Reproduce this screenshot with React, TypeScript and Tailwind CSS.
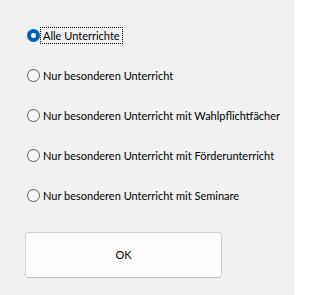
const options = [
  "Alle Unterrichte",
  "Nur besonderen Unterricht",
  "Nur besonderen Unterricht mit Wahlpflichtfächer",
  "Nur besonderen Unterricht mit Förderunterricht",
  "Nur besonderen Unterricht mit Seminare",
];

function Radio({ checked }: { checked: boolean }) {
  if (checked) {
    return (
      <span className="w-[13px] h-[13px] rounded-full bg-[#005fb8] flex items-center justify-center shrink-0">
        <span className="w-[5px] h-[5px] rounded-full bg-white" />
      </span>
    );
  }
  return <span className="w-[13px] h-[13px] rounded-full border border-[#5c5c5c] bg-[#f7f7f7] shrink-0" />;
}

export default function App() {
  return (
    <div className="w-[295px] h-[295px] overflow-hidden bg-[#f0f0f0] text-black text-[11px] font-['Lato',sans-serif] pt-[15px]">
      <div className="flex flex-col pl-[27px]">
        {options.map((label, i) => (
          <div key={label} className="h-10 flex items-center whitespace-nowrap">
            <Radio checked={i === 0} />
            <span
              className={
                i === 0
                  ? "ml-[1px] px-[2px] leading-[15px] outline-1 outline-dotted outline-black"
                  : "ml-[3px] leading-[15px]"
              }
            >
              {label}
            </span>
          </div>
        ))}
      </div>
      <button className="mt-[17px] ml-[25px] w-[197px] h-[46px] bg-[#fdfdfd] border border-[#d0d0d0] border-b-[#bcbcbc] rounded-[4px] text-[11px] text-black">
        OK
      </button>
    </div>
  );
}
